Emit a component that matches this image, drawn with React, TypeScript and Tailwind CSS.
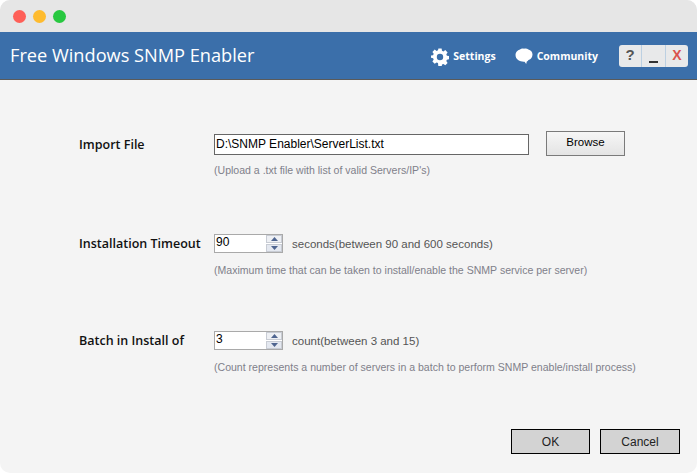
const labelCls = "w-[135px] shrink-0 text-[12.5px] font-semibold text-[#111] font-['Open_Sans',sans-serif]";
const hintCls = "text-[10.55px] text-[#80808a] font-['Liberation_Sans',sans-serif]";
const headerLinkCls = "text-[10.5px] font-bold text-white font-['Open_Sans',sans-serif]";

function GearIcon() {
  return (
    <svg width="18" height="18" viewBox="0 0 18 18">
      <path
        fill="#fff"
        fillRule="evenodd"
        d="M7.4 0.5h3.2l.4 2.3 1.4.6 1.9-1.3 2.3 2.3-1.3 1.9.6 1.4 2.3.4v3.2l-2.3.4-.6 1.4 1.3 1.9-2.3 2.3-1.9-1.3-1.4.6-.4 2.3H7.4L7 15.1l-1.4-.6-1.9 1.3-2.3-2.3 1.3-1.9-.6-1.4-2.3-.4V7.6l2.3-.4.6-1.4-1.3-1.9 2.3-2.3 1.9 1.3L7 2.3zM9 5.800a3.200 3.200 0 1 0 0 6.400 3.200 3.200 0 0 0 0-6.400z"
      />
    </svg>
  );
}

function ChatIcon() {
  return (
    <svg width="18" height="17" viewBox="0 0 18 17">
      <path
        fill="#fff"
        d="M5 1.500C6 .6 7.600.4 9 .8c1.400-.5 3.200-.3 4.400.7 2.400.6 4.100 2.500 4.100 5 0 2.600-1.500 4.700-4 5.500-.5.800-1 1.300-1.700 1.500l-.6 2.500-1.600-2.300C5.300 14 .5 12 .5 6.800.5 4.200 2.400 2.200 5 1.500z"
      />
    </svg>
  );
}

function Spinner({ value }: { value: string }) {
  return (
    <div className="flex h-[19px] w-[69px] border border-[#a9a9a9] bg-white">
      <span className="flex-1 pl-[1px] text-[12px] leading-[15px] text-black font-['Liberation_Sans',sans-serif]">{value}</span>
      <div className="flex w-[16px] flex-col gap-[1px] bg-white">
        <div className="flex flex-1 items-center justify-center border border-[#c8ccd4] bg-[#eef0f4]">
          <svg width="7" height="4" viewBox="0 0 7 4"><path d="M3.500 0 7 4H0z" fill="#4f6590" /></svg>
        </div>
        <div className="flex flex-1 items-center justify-center border border-[#c8ccd4] bg-[#e4e8f0]">
          <svg width="7" height="4" viewBox="0 0 7 4"><path d="M0 0h7L3.500 4z" fill="#4f6590" /></svg>
        </div>
      </div>
    </div>
  );
}

function SpinnerRow({ label, value, note, hint, className }: { label: string; value: string; note: string; hint: string; className: string }) {
  return (
    <div className={className}>
      <div className="flex h-[19px] items-center">
        <span className={`mt-[2px] ${labelCls}`}>{label}</span>
        <Spinner value={value} />
        <span className="ml-[9px] mt-[2px] text-[11.500px] text-[#555] font-['Liberation_Sans',sans-serif]">{note}</span>
      </div>
      <p className={`ml-[135px] mt-[9px] leading-[17px] ${hintCls}`}>{hint}</p>
    </div>
  );
}

export default function App() {
  return (
    <div className="flex h-[473px] w-[697px] flex-col overflow-hidden rounded-[10px] bg-[#f4f4f4]">
      <div className="flex h-[32px] items-center gap-[7px] bg-[#e6e6e6] pl-[13px]">
        <span className="h-[13px] w-[13px] rounded-full bg-[#fe5f57]" />
        <span className="h-[13px] w-[13px] rounded-full bg-[#febb2e]" />
        <span className="h-[13px] w-[13px] rounded-full bg-[#28c840]" />
      </div>

      <header className="flex h-[48px] items-center border-b border-[#5a5a5a] bg-[#3b6faa] pl-[10px] pr-[9px]">
        <h1 className="text-[18.2px] text-white font-['Open_Sans',sans-serif]">Free Windows SNMP Enabler</h1>
        <div className="ml-auto flex items-center">
          <span className="mt-[2px]"><GearIcon /></span>
          <span className={`ml-[4px] mt-[3px] ${headerLinkCls}`}>Settings</span>
          <span className="ml-[19px] mt-[1px]"><ChatIcon /></span>
          <span className={`ml-[4px] mr-[21px] mt-[3px] ${headerLinkCls}`}>Community</span>
          <div className="flex h-[22px] w-[69px] overflow-hidden rounded-[3px] bg-[#e8e9ea] font-['Liberation_Sans',sans-serif]">
            <span className="flex flex-1 items-center justify-center border-r border-[#bcd0e2] text-[15px] font-bold text-[#555]">?</span>
            <span className="flex flex-1 items-end justify-center border-r border-[#bcd0e2] pb-[4px]"><span className="h-[2px] w-[9px] bg-[#333]" /></span>
            <span className="flex flex-1 items-center justify-center text-[14px] font-bold text-[#d9534f]">X</span>
          </div>
        </div>
      </header>

      <main className="flex flex-1 flex-col pl-[79px] pr-[17px]">
        <section className="mt-[51px]">
          <div className="flex items-start">
            <span className={`mt-[5px] ${labelCls}`}>Import File</span>
            <div className="mt-[3px] h-[21px] w-[315px] border border-[#666] bg-white pl-[1px] text-[12px] leading-[19px] text-black font-['Liberation_Sans',sans-serif]">
              D:\SNMP Enabler\ServerList.txt
            </div>
            <button className="ml-[17px] h-[25px] w-[79px] border border-[#7a7a7a] bg-gradient-to-b from-[#f6f6f6] to-[#e4e4e4] pb-[2px] text-[11.5px] text-black font-['Liberation_Sans',sans-serif]">
              Browse
            </button>
          </div>
          <p className={`ml-[135px] mt-[6px] leading-[17px] ${hintCls}`}>(Upload a .txt file with list of valid Servers/IP's)</p>
        </section>

        <SpinnerRow
          className="mt-[55px]"
          label="Installation Timeout"
          value="90"
          note="seconds(between 90 and 600 seconds)"
          hint="(Maximum time that can be taken to install/enable the SNMP service per server)"
        />
        <SpinnerRow
          className="mt-[52px]"
          label="Batch in Install of"
          value="3"
          note="count(between 3 and 15)"
          hint="(Count represents a number of servers in a batch to perform SNMP enable/install process)"
        />

        <div className="mt-[53px] flex justify-end gap-[10px]">
          <button className="h-[25px] w-[79px] border border-black bg-[#d3d3d3] text-[12px] text-[#222] font-['Liberation_Sans',sans-serif]">OK</button>
          <button className="h-[25px] w-[80px] border border-black bg-[#d3d3d3] text-[12px] text-[#222] font-['Liberation_Sans',sans-serif]">Cancel</button>
        </div>
      </main>
    </div>
  );
}
